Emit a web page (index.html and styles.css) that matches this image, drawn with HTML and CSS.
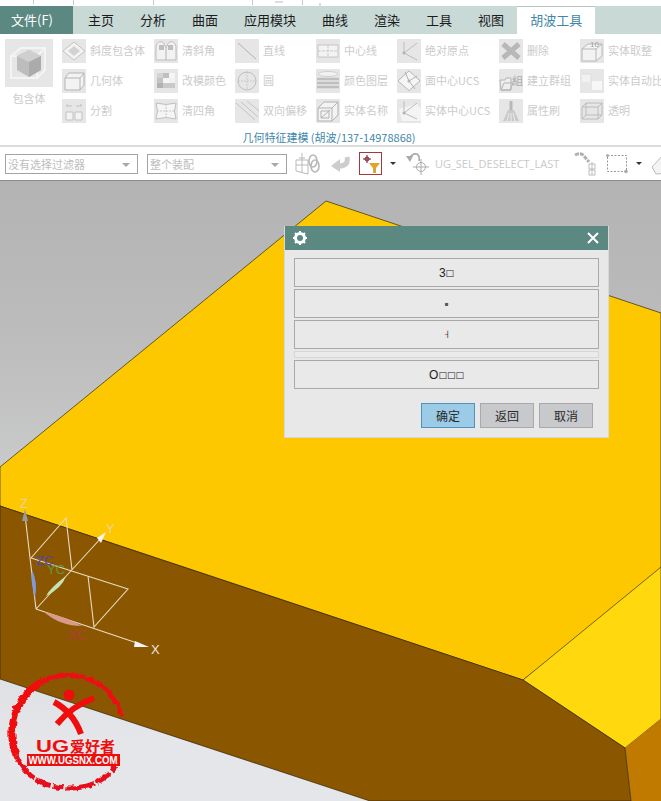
FILE: index.html
```html
<!DOCTYPE html>
<html lang="zh">
<head>
<meta charset="utf-8">
<title>NX</title>
<link rel="stylesheet" href="styles.css">
</head>
<body>
<div class="app">
  <svg class="topstrip" width="661" height="6" viewBox="0 0 661 6"><path d="M33.5 0v4M73.5 0v5M153.5 0v5M252.5 0v5M302.5 0v5" stroke="#c8c8c8"/><path d="M275 2h8M320 3v3" stroke="#ddd" stroke-width="2"/></svg>
  <nav class="tabs">
    <div class="tab-file">文件(F)</div>
    <div class="tab-list">
      <div class="tab">主页</div><div class="tab">分析</div><div class="tab">曲面</div><div class="tab">应用模块</div><div class="tab">曲线</div><div class="tab">渲染</div><div class="tab">工具</div><div class="tab">视图</div><div class="tab tab-active">胡波工具</div>
    </div>
  </nav>
  <section class="ribbon">
    <div class="ribbon-body">
      <div class="large">
        <div class="large-icon"><svg width="48" height="48" viewBox="0 0 48 48"><path d="M6 17 16 9h24v22l-8 8H6z M6 17h26v22 M32 17l8-8" fill="none" stroke="#f4f4f4" stroke-width="2"/><path d="M12 17l12-6 12 6v14l-12 7-12-7z" fill="#bdbdbd"/><path d="M12 17l12 6 12-6-12-6z" fill="#cfcfcf"/><path d="M24 23v15l12-7V17z" fill="#ababab"/></svg></div>
        <div class="large-label">包含体</div>
      </div>
      <div class="grid">
        <div class="item"><span class="ic"><svg viewBox="0 0 24 24"><path d="M12 3 23 12 12 21 1 12z" fill="#f6f6f6" stroke="#bcbcbc"/><path d="M12 7l6 5-6 5-6-5z" fill="#cfcfcf"/></svg></span>斜度包含体</div>
        <div class="item"><span class="ic"><svg viewBox="0 0 24 24"><path d="M3 9h15v12H3zM3 9l4-5h15v12l-4 5M18 9l4-5" fill="#f6f6f6" stroke="#ababab"/></svg></span>几何体</div>
        <div class="item"><span class="ic"><svg viewBox="0 0 24 24"><path d="M4 13h7v8H4zM13 13h7v8h-7z" fill="#f6f6f6" stroke="#bbb"/><path d="M4 7h6M14 7h6M4 7l2-2M20 7l-2-2" stroke="#bbb" fill="none"/></svg></span>分割</div>
        <div class="item"><span class="ic"><svg viewBox="0 0 24 24"><path d="M2 21V9c0-8 8-8 9-2 1 2 1 2 2 0 1-6 9-6 9 2v12z" fill="#f5f5f5" stroke="#b5b5b5"/><path d="M5 11V6h5v5zM14 11V6h5v5z" fill="#b8b8b8"/><path d="M12 8v13" stroke="#aaa"/></svg></span>清斜角</div>
        <div class="item"><span class="ic"><svg viewBox="0 0 24 24"><path d="M3 4h6v5H3z" fill="#d0d0d0"/><path d="M9 4h6v5H9z" fill="#b9b9b9"/><path d="M15 9h6v5h-6z" fill="#f4f4f4"/><path d="M3 9h6v5H3z" fill="#bdbdbd"/><path d="M9 14h6v5H9zM15 14h6v5h-6z" fill="#c4c4c4"/><path d="M3 14h6v5H3z" fill="#aaa"/><path d="M15 4h6v5h-6zM9 9h6v5H9z" fill="#f8f8f8"/></svg></span>改模颜色</div>
        <div class="item"><span class="ic"><svg viewBox="0 0 24 24"><path d="M2 4Q12 7 22 4 19 12 22 20 12 17 2 20 5 12 2 4z" fill="#f8f8f8" stroke="#b9b9b9"/><path d="M3 12h18M12 5v14" stroke="#c4c4c4" stroke-dasharray="2 1" fill="none"/></svg></span>清四角</div>
        <div class="item"><span class="ic"><svg viewBox="0 0 24 24"><path d="M3 4 21 20" stroke="#aaa" fill="none"/></svg></span>直线</div>
        <div class="item"><span class="ic"><svg viewBox="0 0 24 24"><path d="M3 12h18M12 3v18" stroke="#c4c4c4" stroke-dasharray="2 1" fill="none"/><circle cx="12" cy="12" r="9" fill="none" stroke="#b5b5b5"/></svg></span>圆</div>
        <div class="item"><span class="ic"><svg viewBox="0 0 24 24"><path d="M1 4 20 21M6 3 23 18M12 2 24 12" stroke="#bdbdbd" fill="none"/></svg></span>双向偏移</div>
        <div class="item"><span class="ic"><svg viewBox="0 0 24 24"><path d="M2 6h20v12H2z" fill="#f6f6f6" stroke="#c0c0c0"/><path d="M2 12h20M12 6v12" stroke="#c4c4c4" stroke-dasharray="3 1"/></svg></span>中心线</div>
        <div class="item"><span class="ic"><svg viewBox="0 0 24 24"><ellipse cx="12" cy="5" rx="10" ry="2.500" fill="#f4f4f4" stroke="#ccc"/><path d="M1 10h22M1 14h22M1 18h22" stroke="#b9b9b9" stroke-width="2.400"/></svg></span>颜色图层</div>
        <div class="item"><span class="ic"><svg viewBox="0 0 24 24"><path d="M2 9h14v13H2zM2 9l6-6h14v13l-6 6M16 9l6-6" fill="#f6f6f6" stroke="#a9a9a9"/><path d="M5 19 14 11M5 12h8v7H5z" stroke="#a9a9a9" fill="none"/></svg></span>实体名称</div>
        <div class="item"><span class="ic"><svg viewBox="0 0 24 24"><path d="M7 3 7 14 20 21M7 14 20 4" stroke="#b5b5b5" fill="none"/><circle cx="7" cy="14" r="1.500" fill="#aaa"/></svg></span>绝对原点</div>
        <div class="item"><span class="ic"><svg viewBox="0 0 24 24"><path d="M12 1 23 12 12 23 1 12z" fill="#f8f8f8" stroke="#aaa" transform="matrix(1 0 0 .9 0 1)"/><path d="M8 3 12 12 20 7M12 12l6 8" stroke="#aaa" fill="none"/><circle cx="12" cy="12" r="1.500" fill="#aaa"/></svg></span>面中心UCS</div>
        <div class="item"><span class="ic"><svg viewBox="0 0 24 24"><path d="M2 10 20 5 24 10V22H5z" fill="#f7f7f7"/><path d="M7 2V14L20 20M7 14 20 4" stroke="#b5b5b5" fill="none"/><circle cx="7" cy="14" r="1.500" fill="#aaa"/></svg></span>实体中心UCS</div>
        <div class="item"><span class="ic"><svg viewBox="0 0 24 24"><path d="M4 5 20 19M20 5 4 19" stroke="#b0b0b0" stroke-width="5"/></svg></span>删除</div>
        <div class="item"><span class="ic ic-group"><svg viewBox="0 0 24 24"><path d="M1 11h5l1-2h5v12H2zM2 21l3-7h9l-3 7z" fill="#f0f0f0" stroke="#aaa"/></svg><i>組</i></span>建立群组</div>
        <div class="item"><span class="ic"><svg viewBox="0 0 24 24"><path d="M12 2v9" stroke="#b0b0b0" stroke-width="3"/><path d="M9 11h6l5 11H4z" fill="#c4c4c4"/><path d="M8 22l2-8M12 22v-8M16 22l-2-8" stroke="#eee"/></svg></span>属性刷</div>
        <div class="item"><span class="ic"><svg viewBox="0 0 24 24"><path d="M2 10l6-5h14v12l-6 5H2zM2 10h14v12M16 10l6-5" fill="#f6f6f6" stroke="#b0b0b0"/><text x="10" y="8" class="ic-num">10</text></svg></span>实体取整</div>
        <div class="item"><span class="ic"><svg viewBox="0 0 24 24"><path d="M2 5h9v8H2z" fill="#f3f3f3"/><path d="M12 12h10v9H12z" fill="#fafafa"/><path d="M2 5h9v8" fill="none" stroke="#ddd"/></svg></span>实体自动比</div>
        <div class="item"><span class="ic"><svg viewBox="0 0 24 24"><path d="M2 8l4-4h16v12l-4 4H2zM2 8h16v12M18 8l4-4M6 4v12h16M6 16l-4 4" fill="none" stroke="#b5b5b5"/></svg></span>透明</div>
      </div>
    </div>
    <div class="group-label">几何特征建模 (胡波/137-14978868)</div>
  </section>
  <section class="toolbar">
    <div class="select select-a">没有选择过滤器<span class="caret"></span></div>
    <div class="select select-b">整个装配<span class="caret"></span></div>
    <svg class="t-assembly" width="25" height="26" viewBox="0 0 25 26"><path d="M1 9h12v14l-12-3zM7 2v20M1 14h12M4 7h6" fill="none" stroke="#b9b9b9"/><ellipse cx="18" cy="10" rx="4" ry="6" fill="none" stroke="#b9b9b9" stroke-width="1.600"/><ellipse cx="20" cy="15" rx="4" ry="6" fill="none" stroke="#b9b9b9" stroke-width="1.600"/></svg>
    <svg class="t-return" width="19" height="16" viewBox="0 0 19 16"><path d="M16 1Q18 10 8 10" fill="none" stroke="#cdcdcd" stroke-width="5"/><path d="M9 3 0 10l9 6z" fill="#cdcdcd"/></svg>
    <div class="t-filter"><svg width="20" height="20" viewBox="0 0 20 20"><path d="M2 5h8M6 1v8" stroke="#7a2030"/><circle cx="6" cy="5" r="2" fill="none" stroke="#7a2030"/><path d="M8 9h11l-4 5v5h-3v-5z" fill="#e0a52a"/></svg></div>
    <span class="t-dd t-dd-a"></span>
    <svg class="t-undo" width="24" height="24" viewBox="0 0 24 24"><path d="M4 7Q7 1 12 2 15 4 14 9" fill="none" stroke="#aaa" stroke-width="1.600"/><path d="M1 4l7 0-3 6z" fill="#aaa"/><circle cx="16" cy="15" r="4.500" fill="none" stroke="#aaa"/><path d="M16 7v16M8 15h16" stroke="#aaa"/></svg>
    <span class="t-text">UG_SEL_DESELECT_LAST</span>
    <svg class="t-chain" width="24" height="24" viewBox="0 0 24 24"><path d="M1 3q6-3 9 1l5 6" fill="none" stroke="#b0b0b0" stroke-width="3" stroke-dasharray="4 1"/><path d="M15 12h6v5h-6zM15 18h6v5h-6zM18 10v13" fill="none" stroke="#bbb"/></svg>
    <svg class="t-rect" width="22" height="20" viewBox="0 0 22 20"><path d="M1.500 1.500h19v16h-19z" fill="none" stroke="#999" stroke-dasharray="2 1.500"/><circle cx="1.500" cy="1.500" r="1.500" fill="#aaa"/><circle cx="20" cy="17.500" r="1.800" fill="#aaa"/></svg>
    <span class="t-dd t-dd-b"></span>
    <svg class="t-erase" width="30" height="24" viewBox="0 0 30 24"><path d="M1 15 12 3l18 3v14L5 22z" fill="#f4f4f4" stroke="#bbb"/></svg>
  </section>
  <main class="viewport">
    <svg class="scene" width="661" height="620" viewBox="0 181 661 620">
      <defs>
        <filter id="rough" x="-10%" y="-10%" width="120%" height="120%"><feTurbulence type="fractalNoise" baseFrequency="0.2" numOctaves="2" seed="4"/><feDisplacementMap in="SourceGraphic" scale="5" xChannelSelector="R" yChannelSelector="G"/></filter>
      </defs>
      <path d="M326 201 661 313V573L523 680 0 506V467z" fill="#fec800" stroke="#2c2a10" stroke-width=".7"/>
      <path d="M523 680 661 567V719L625 748z" fill="#ffd80e" stroke="#3a3410" stroke-width=".7"/>
      <path d="M625 748 661 719V801H631z" fill="#c17a00"/>
      <path d="M0 506 523 680 625 748 631 801H370L0 679z" fill="#8b5600" stroke="#30240c" stroke-width=".7"/>

      <g class="gizmo">
        <path d="M36 609 25 515M36 609 102 537M36 609 140 644M31 558 66 518 72 570M31 558 128 589 94 627 88 576" fill="none" stroke="#e8dcc6" stroke-width="1.100"/>
        <path d="M25 509 22 521h6z" fill="#9a9a9a"/>
        <path d="M106 532 97 538l4 5z" fill="#f4f4f4"/>
        <path d="M149 647 135 641l-1 6z" fill="#f4f4f4"/>
        <path d="M32 570q-2 10 3 28q3-16-3-28z" fill="#7f9bdc"/>
        <path d="M46 596q4-8 20-20q-4 12-20 20z" fill="#c3e4b0"/>
        <path d="M44 612q20 4 38 14q-22 0-38-14z" fill="#d99a8a"/>
        <text x="36" y="565" class="g-zc">ZC</text>
        <text x="47" y="574" class="g-yc">YC</text>
        <text x="68" y="639" class="g-xc">XC</text>
        <text x="20" y="508" class="g-axis g-axis-dim">Z</text>
        <text x="106" y="533" class="g-axis g-axis-dim">Y</text>
        <text x="151" y="654" class="g-axis">X</text>
      </g>

      <g class="logo">
        <g filter="url(#rough)" fill="none">
          <path d="M16 755A56 58 0 0 1 42 682" stroke="#f00d0d" stroke-width="7"/>
          <path d="M42 682A56 58 0 0 1 122 716" stroke="#ee0f12" stroke-width="4"/>
          <path d="M16 755Q30 788 70 788 100 788 116 766" stroke="#e8101a" stroke-width="5" stroke-dasharray="30 2 16 3 10 2"/>
        </g>
        <circle cx="69" cy="695" r="5.500" fill="#f00d0d"/>
        <path d="M54 702Q73 712 81 734M94 698Q72 706 57 724" fill="none" stroke="#f00d0d" stroke-width="6"/>
        <text x="36" y="752" class="logo-ug" textLength="33" lengthAdjust="spacingAndGlyphs">UG</text>
        <text x="70" y="752" class="logo-cn">爱好者</text>
        <rect x="27" y="754" width="93" height="12" fill="#ee0d0d"/>
        <text x="73" y="764" class="logo-url" textLength="89" lengthAdjust="spacingAndGlyphs">WWW.UGSNX.COM</text>
      </g>
    </svg>

    <div class="dialog">
      <header class="dialog-title">
        <svg width="14" height="14" viewBox="0 0 14 14"><circle cx="7" cy="7" r="4.500" fill="none" stroke="#fff" stroke-width="3"/><path d="M7 0v3M7 11v3M0 7h3M11 7h3M2 2l2 2M10 10l2 2M12 2l-2 2M4 10l-2 2" stroke="#fff" stroke-width="2"/></svg>
        <svg width="12" height="12" viewBox="0 0 12 12"><path d="M1 1 11 11M11 1 1 11" stroke="#fff" stroke-width="2"/></svg>
      </header>
      <div class="dialog-body">
        <div class="d-btn">3<span class="tofu">□</span></div>
        <div class="d-btn"><span class="tiny">▪</span></div>
        <div class="d-btn"><span class="mark">˧</span></div>
        <div class="d-sep"></div>
        <div class="d-btn">O<span class="tofu">□□□</span></div>
        <div class="d-actions">
          <div class="act act-primary">确定</div>
          <div class="act">返回</div>
          <div class="act">取消</div>
        </div>
      </div>
    </div>
  </main>
</div>
</body>
</html>
```
FILE: styles.css
```css
* { box-sizing: border-box; }
html, body { margin: 0; padding: 0; }
body { background: #fff; font-family: "Noto Sans CJK SC", "Liberation Sans", sans-serif; overflow: hidden; }
.app { width: 661px; height: 801px; display: flex; flex-direction: column; overflow: hidden; }
.topstrip { display: block; flex: none; }

.tabs { flex: none; height: 28px; display: flex; background: #c9d9d6; font-size: 13px; line-height: 28px; color: #1c1c1c; }
.tab-file { width: 73px; background: #5b8880; color: #fff; padding-left: 11px; }
.tab-list { display: flex; margin-left: 2px; }
.tab { padding: 0 13px; white-space: nowrap; }
.tab-active { background: #fff; color: #3f87a8; border-top: 1px solid #b9c4c2; line-height: 26px; }

.ribbon { flex: none; height: 113px; background: #fff; border-bottom: 2px solid #dcdcdc; display: flex; flex-direction: column; }
.ribbon-body { display: flex; padding: 5px 0 0 5px; gap: 9px; height: 95px; }
.large { width: 48px; display: flex; flex-direction: column; align-items: center; }
.large-icon { width: 48px; height: 48px; background: #e6e6e6; }
.large-icon svg { display: block; }
.large-label { font-size: 11px; color: #cbcbcb; line-height: 16px; margin-top: 3px; white-space: nowrap; }
.grid { display: grid; grid-auto-flow: column; grid-template-rows: repeat(3, 24px); row-gap: 6px; grid-template-columns: 92px 81px 81px 81px 102px 81px 81px; }
.item { display: flex; align-items: center; gap: 4px; font-size: 11px; color: #cbcbcb; white-space: nowrap; padding-bottom: 2px; height: 24px; }
.ic { width: 24px; height: 24px; flex: none; background: #e6e6e6; display: block; position: relative; margin-bottom: -2px; }
.ic svg { display: block; width: 24px; height: 24px; opacity: .85; }
.ic-num { font-family: "Liberation Sans", sans-serif; font-size: 8px; fill: #999; }
.ic-group i { position: absolute; right: 0; top: 4px; font-style: normal; font-size: 11px; line-height: 14px; color: #aaa; }
.group-label { font-size: 11px; line-height: 16px; text-align: center; color: #3f87a8; margin-left: -3px; }

.toolbar { flex: none; height: 34px; background: #fff; display: flex; align-items: center; padding-left: 5px; border-bottom: 1px solid #8c8c8c; }
.select { height: 20px; border: 1px solid #a3a3a3; font-size: 11px; line-height: 18px; color: #bdbdbd; padding-left: 2px; position: relative; flex: none; }
.select-a { width: 133px; }
.select-b { width: 140px; margin-left: 9px; }
.caret { position: absolute; right: 7px; top: 8px; border: 4px solid transparent; border-top: 4px solid #a8a8a8; border-bottom: 0; }
.t-assembly { margin-left: 8px; flex: none; }
.t-return { margin-left: 11px; flex: none; }
.t-filter { width: 23px; height: 23px; margin-left: 9px; border: 1px solid #a33a3a; flex: none; padding: 1px; }
.t-filter svg { display: block; }
.t-dd { width: 0; height: 0; flex: none; border: 3px solid transparent; border-top: 3px solid #333; border-bottom: 0; }
.t-dd-a { margin-left: 8px; }
.t-undo { margin-left: 9px; flex: none; }
.t-text { margin-left: 6px; width: 131px; flex: none; font-family: "Open Sans", "Liberation Sans", sans-serif; font-size: 11px; color: #c9c9c9; white-space: nowrap; }
.t-chain { margin-left: 8px; flex: none; }
.t-rect { margin-left: 8px; flex: none; }
.t-dd-b { margin-left: 8px; }
.t-erase { margin-left: 9px; flex: none; }

.viewport { flex: none; position: relative; height: 620px; background: linear-gradient(#b3b3b3, #bcbcbc 25%, #e4e6e9 90%); }
.scene { display: block; }
.gizmo text { font-family: "Liberation Sans", sans-serif; font-size: 13px; }
.gizmo .g-zc { fill: #4848b8; }
.gizmo .g-yc { fill: #5e9a3e; }
.gizmo .g-xc { fill: #b83a3a; }
.gizmo .g-axis { fill: #ece8e0; }
.gizmo .g-axis-dim { fill: #e6d49a; }
.logo-ug { font-family: "Liberation Sans", sans-serif; font-weight: bold; font-size: 16px; fill: #f00d0d; }
.logo-cn { font-family: "Noto Sans CJK SC", sans-serif; font-weight: bold; font-size: 15px; fill: #f00d0d; }
.logo-url { font-family: "Liberation Sans", sans-serif; font-weight: bold; font-size: 10.500px; fill: #fff; text-anchor: middle; }

.dialog { position: absolute; left: 284px; top: 45px; width: 325px; height: 212px; background: #e8e8e8; border: 1px solid #d8d8d8; border-top: 0; }
.dialog-title { height: 24px; background: #5b8880; display: flex; justify-content: space-between; align-items: center; padding: 0 9px 0 8px; }
.dialog-title svg { display: block; }
.dialog-body { padding: 8px 9px 0; display: flex; flex-direction: column; gap: 2px; }
.d-btn { height: 29px; border: 1px solid #a9a9a9; background: #e9e9e9; display: flex; justify-content: center; align-items: center; font-family: "Liberation Sans", sans-serif; font-size: 12px; color: #222; }
.tofu { font-family: "DejaVu Sans", sans-serif; font-size: 9px; }
.tiny { font-family: "DejaVu Sans", sans-serif; font-size: 6px; color: #555; }
.mark { font-family: "DejaVu Sans", sans-serif; font-size: 11px; color: #444; }
.d-sep { height: 7px; border: 1px solid #d6d6d6; background: #ebebeb; }
.d-actions { display: flex; justify-content: flex-end; gap: 5px; margin-top: 12px; padding-right: 6px; }
.act { width: 54px; height: 25px; border: 1px solid #a9a9a9; background: #c8c9cc; font-size: 12px; line-height: 23px; text-align: center; color: #2a2a2a; }
.act-primary { background: #9bcbe6; border-color: #4f93bc; }
```
